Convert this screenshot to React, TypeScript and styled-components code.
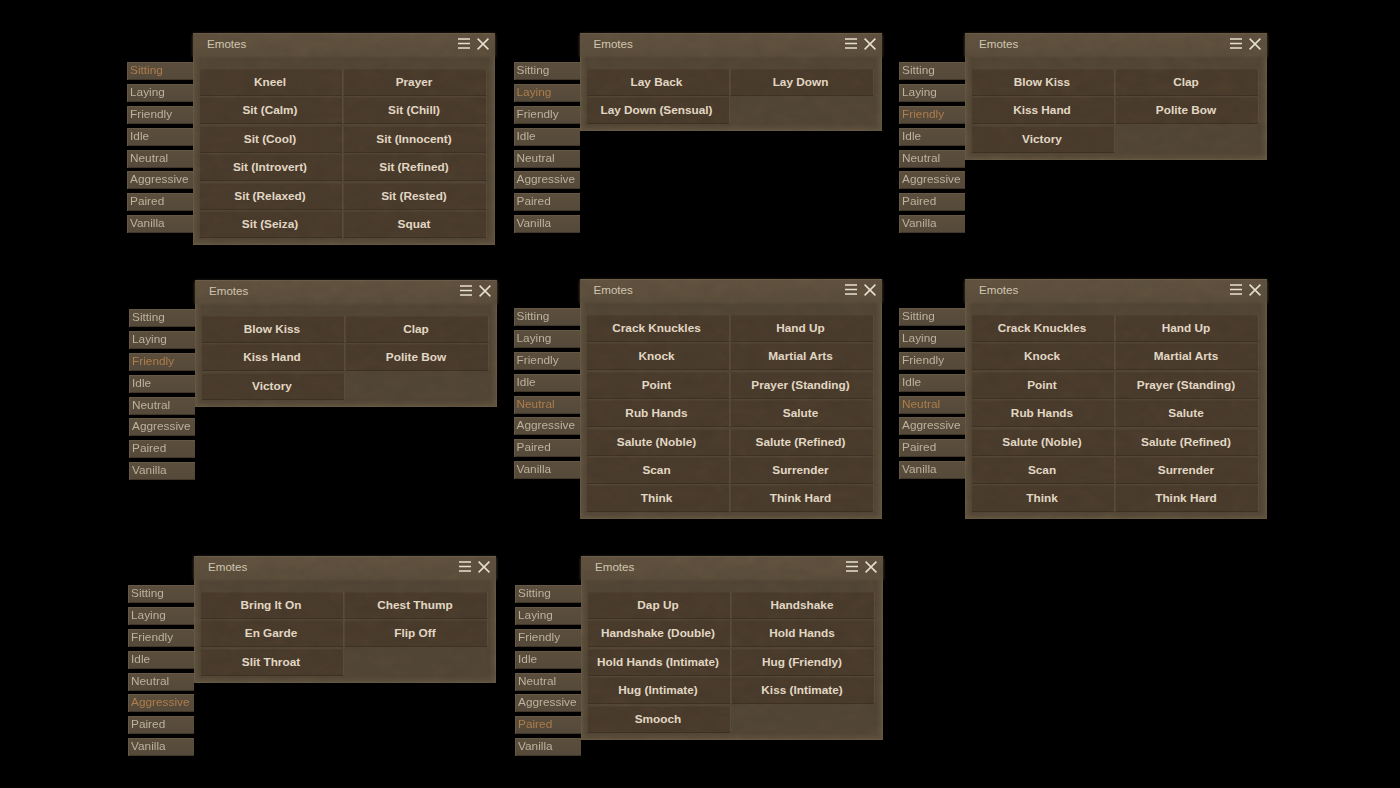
import React from 'react'
import styled, { createGlobalStyle } from 'styled-components'

const GlobalStyle = createGlobalStyle`
    html, body {
        margin: 0;
        padding: 0;
        background: #000;
    }
`;

const Desktop = styled.div`
    position: relative;
    width: 1400px;
    height: 788px;
    overflow: hidden;
    background: #000;
    font-family: "Liberation Sans", Arial, sans-serif;
`;

const Widget = styled.div<{ $x: number; $y: number }>`
    position: absolute;
    left: ${p => p.$x}px;
    top: ${p => p.$y}px;
    display: flex;
    align-items: flex-start;
    filter: blur(0.35px);
`;

const Tabs = styled.div`
    display: flex;
    flex-direction: column;
    gap: 3.9px;
    width: 66px;
    margin-top: 29px;
`;

const Tab = styled.div<{ $active?: boolean }>`
    height: 18px;
    line-height: 17px;
    padding-left: 3px;
    font-size: 11.8px;
    letter-spacing: 0.02px;
    color: ${p => (p.$active ? '#ad7d4c' : '#bcb29d')};
    background: linear-gradient(180deg, #5b4e3c 0%, #55493a 100%);
    box-shadow: inset 0 1px 0 #655845, inset 1px 0 0 #655845, inset 0 -1px 0 #40362a;
`;

const Window = styled.div`
    position: relative;
    width: 302px;
    box-sizing: border-box;
    background: #4f4333;
    box-shadow: inset 0 0 0 1px #625540, inset 0 0 5px 3px #5f523f;
    padding-bottom: 8px;
`;

const Grain = styled.svg`
    position: absolute;
    inset: 0;
    width: 100%;
    height: 100%;
    mix-blend-mode: overlay;
    opacity: 0.13;
    pointer-events: none;
`;

const TitleBar = styled.div`
    display: flex;
    align-items: center;
    height: 21px;
    padding: 0 6px 2px 14px;
    background: linear-gradient(180deg, #5d4f3d 0%, #574a38 100%);
    box-shadow: inset 0 1px 0 #675945, 0 1px 3px #584b3a;
`;

const Title = styled.span`
    flex: 1;
    font-size: 11.6px;
    color: #cdc3ad;
`;

const TitleIcons = styled.div`
    display: flex;
    align-items: center;
    gap: 7px;
    color: #e6decd;
`;

const Grid = styled.div`
    display: grid;
    grid-template-columns: 142px 142px;
    column-gap: 2px;
    grid-auto-rows: 26px;
    row-gap: 2.4px;
    padding: 13px 8px 0 7px;
`;

const Button = styled.div`
    display: flex;
    align-items: center;
    justify-content: center;
    padding-right: 2px;
    font-size: 11.8px;
    font-weight: 700;
    color: #e0d6c2;
    background: #47392a;
    box-shadow: 0 1px 0 #3a2f21, 1px 0 0 #574937, inset 0 1px 1px #4c3f2e;
`;

const MenuIcon = () => (
    <svg width="12" height="11" viewBox="0 0 12 11" fill="none" stroke="currentColor" strokeWidth="1.5">
        <path d="M0 1h12M0 5.5h12M0 10h12" />
    </svg>
)

const CloseIcon = () => (
    <svg width="12" height="12" viewBox="0 0 12 12" fill="none" stroke="currentColor" strokeWidth="1.5">
        <path d="M.6.6l10.8 10.8M11.4.6L.6 11.4" />
    </svg>
)

const TAB_NAMES = ['Sitting', 'Laying', 'Friendly', 'Idle', 'Neutral', 'Aggressive', 'Paired', 'Vanilla']

const PANELS = [
    { x: 127, y: 33, active: 'Sitting', items: ['Kneel', 'Prayer', 'Sit (Calm)', 'Sit (Chill)', 'Sit (Cool)', 'Sit (Innocent)', 'Sit (Introvert)', 'Sit (Refined)', 'Sit (Relaxed)', 'Sit (Rested)', 'Sit (Seiza)', 'Squat'] },
    { x: 513.5, y: 33, active: 'Laying', items: ['Lay Back', 'Lay Down', 'Lay Down (Sensual)'] },
    { x: 899, y: 33, active: 'Friendly', items: ['Blow Kiss', 'Clap', 'Kiss Hand', 'Polite Bow', 'Victory'] },
    { x: 129, y: 280, active: 'Friendly', items: ['Blow Kiss', 'Clap', 'Kiss Hand', 'Polite Bow', 'Victory'] },
    { x: 513.5, y: 279, active: 'Neutral', items: ['Crack Knuckles', 'Hand Up', 'Knock', 'Martial Arts', 'Point', 'Prayer (Standing)', 'Rub Hands', 'Salute', 'Salute (Noble)', 'Salute (Refined)', 'Scan', 'Surrender', 'Think', 'Think Hard'] },
    { x: 899, y: 279, active: 'Neutral', items: ['Crack Knuckles', 'Hand Up', 'Knock', 'Martial Arts', 'Point', 'Prayer (Standing)', 'Rub Hands', 'Salute', 'Salute (Noble)', 'Salute (Refined)', 'Scan', 'Surrender', 'Think', 'Think Hard'] },
    { x: 128, y: 556, active: 'Aggressive', items: ['Bring It On', 'Chest Thump', 'En Garde', 'Flip Off', 'Slit Throat'] },
    { x: 515, y: 556, active: 'Paired', items: ['Dap Up', 'Handshake', 'Handshake (Double)', 'Hold Hands', 'Hold Hands (Intimate)', 'Hug (Friendly)', 'Hug (Intimate)', 'Kiss (Intimate)', 'Smooch'] },
]

const App: React.FC = () => {
    return (
        <Desktop>
            <GlobalStyle />
            {PANELS.map((panel, i) => (
                <Widget key={`${panel.x}-${panel.y}`} $x={panel.x} $y={panel.y}>
                    <Tabs>
                        {TAB_NAMES.map(name => (
                            <Tab key={name} $active={name === panel.active}>{name}</Tab>
                        ))}
                    </Tabs>
                    <Window>
                        <TitleBar>
                            <Title>Emotes</Title>
                            <TitleIcons>
                                <MenuIcon />
                                <CloseIcon />
                            </TitleIcons>
                        </TitleBar>
                        <Grid>
                            {panel.items.map(item => (
                                <Button key={item}>{item}</Button>
                            ))}
                        </Grid>
                        <Grain>
                            <filter id={`grain-${i}`}>
                                <feTurbulence type="fractalNoise" baseFrequency="0.06 0.1" numOctaves="3" seed={i + 3} />
                                <feColorMatrix type="saturate" values="0" />
                            </filter>
                            <rect width="100%" height="100%" filter={`url(#grain-${i})`} />
                        </Grain>
                    </Window>
                </Widget>
            ))}
        </Desktop>
    )
}

export default App
